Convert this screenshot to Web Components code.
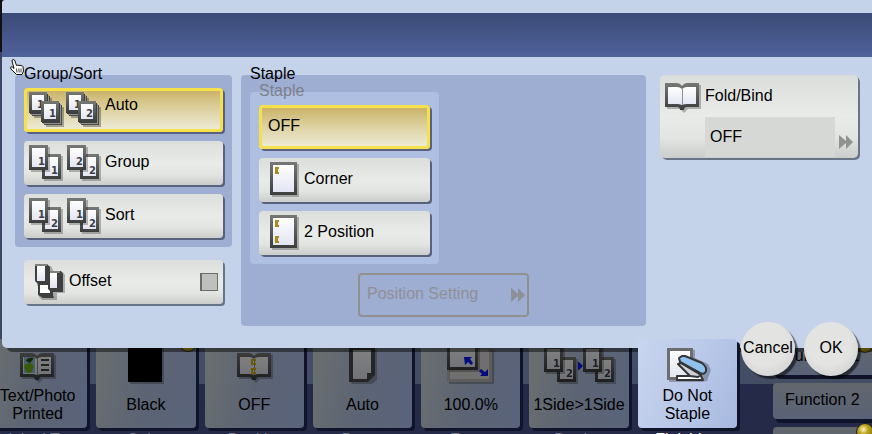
<!DOCTYPE html>
<html lang="en">
<head>
<meta charset="utf-8">
<title>Finishing</title>
<style>
  body { margin: 0; overflow: hidden; background: #252a48; font: 16px/20px "Liberation Sans", Arial, sans-serif; color: #000; }
</style>
</head>
<body>
<copier-screen>
  <finish-dialog slot="dialog">
    <option-group slot="sort" heading="Group/Sort">
      <option-button pressed high><paper-pairs slot="icon" digits="1112" stacked></paper-pairs>Auto</option-button>
      <option-button><paper-pairs slot="icon" digits="1122"></paper-pairs>Group</option-button>
      <option-button><paper-pairs slot="icon" digits="1212"></paper-pairs>Sort</option-button>
    </option-group>
    <offset-check slot="sort">Offset</offset-check>
    <option-group slot="staple" heading="Staple" fill>
      <option-group heading="Staple" nested>
        <option-button plain pressed>OFF</option-button>
        <option-button><staple-sheet slot="icon" count="1"></staple-sheet>Corner</option-button>
        <option-button><staple-sheet slot="icon" count="2"></staple-sheet>2 Position</option-button>
      </option-group>
      <position-button>Position Setting</position-button>
    </option-group>
    <fold-button slot="fold" value="OFF">Fold/Bind</fold-button>
    <round-button slot="actions">Cancel</round-button>
    <round-button slot="actions">OK</round-button>
  </finish-dialog>
  <function-bar slot="bar">
    <function-tile icon="photo" caption="Original Type">Text/Photo Printed</function-tile>
    <function-tile icon="black" caption="Color" lamp>Black</function-tile>
    <function-tile icon="booklet" caption="Booklet">OFF</function-tile>
    <function-tile icon="sheet" caption="Paper">Auto</function-tile>
    <function-tile icon="zoom" caption="Zoom">100.0%</function-tile>
    <function-tile icon="sides" caption="Duplex">1Side&gt;1Side</function-tile>
    <function-tile icon="stapler" caption="Finishing" active>Do Not Staple</function-tile>
    <side-button slot="side" lamp>Function 1</side-button>
    <side-button slot="side">Function 2</side-button>
    <side-button slot="side" lamp>Function 3</side-button>
  </function-bar>
</copier-screen>

<script>
const define = (name, render) => customElements.define(name, class extends HTMLElement {
  connectedCallback() {
    if (this.shadowRoot) return;
    this.attachShadow({ mode: 'open' }).innerHTML = render(this);
  }
});
const reset = ':host,*{box-sizing:border-box}button{font:inherit;color:inherit;border:0;margin:0;padding:0;background:none;text-align:left}svg{display:block}';
const face = 'linear-gradient(#dcdedc,#e9ebe8 50%,#e3e5e2 75%,#cbcdcc)';

const grads = `<defs>
  <linearGradient id="frame" x1="0" y1="0" x2="0" y2="1"><stop offset="0" stop-color="#767875"/><stop offset="1" stop-color="#3c3e3e"/></linearGradient>
  <linearGradient id="paper" x1="0" y1="0" x2="0" y2="1"><stop offset="0" stop-color="#fff"/><stop offset="1" stop-color="#e2e5f2"/></linearGradient>
</defs>`;
const sheet = (x, y, w, h, digit = '', shadow = true) => `
  ${shadow ? `<rect x="${x + 2}" y="${y + 2}" width="${w}" height="${h}" fill="#000" opacity=".25"/>` : ''}
  <rect x="${x}" y="${y}" width="${w}" height="${h}" fill="url(#frame)"/>
  <rect x="${x + 3}" y="${y + 3}" width="${w - 6}" height="${h - 6}" fill="url(#paper)"/>
  ${digit && `<text x="${x + w - 10}" y="${y + h - 5}" font-family="DejaVu Sans" font-weight="bold" font-size="10" fill="#3e4046">${digit}</text>`}`;
const stack = (x, y, digit) => `
  <rect x="${x + 5}" y="${y + 6}" width="18" height="20" fill="#000" opacity=".3"/>
  <rect x="${x + 3}" y="${y + 4}" width="18" height="20" fill="#4a4c4c"/>
  <rect x="${x + 2}" y="${y + 3}" width="18" height="20" fill="#8e908e"/>
  <rect x="${x + 1}" y="${y + 2}" width="18" height="20" fill="#3e4040"/>
  ${sheet(x, y, 18, 21, digit, false)}`;
const book = (x, y) => `
  <path transform="translate(${x} ${y})" fill="#000" opacity=".25" d="M2 2h13l4 3 4-3h13v24H23l-4 4-4-4H2z"/>
  <path transform="translate(${x} ${y})" fill="url(#frame)" d="M0 0h12q3 0 5 3q2-3 5-3h12v24H22q-3 0-3 3h-4q0-3-3-3H0z"/>
  <path transform="translate(${x} ${y})" fill="url(#paper)" d="M3 4h9q3 0 5 2q2-2 5-2h9v17h-9q-3 0-5 1-2-1-5-1H3z"/>
  <path transform="translate(${x} ${y})" fill="none" stroke="#8c8e96" d="M17.500 6v16"/>`;

define('paper-pairs', el => {
  const d = el.getAttribute('digits');
  const art = el.hasAttribute('stacked')
    ? stack(0, 0, d[0]) + stack(12, 9, d[1]) + stack(37, 0, d[2]) + stack(49, 9, d[3])
    : sheet(13, 9, 19, 25, d[1]) + sheet(0, 0, 19, 25, d[0]) + sheet(51, 9, 19, 25, d[3]) + sheet(38, 0, 19, 25, d[2]);
  return `<style>:host{display:block;width:76px}svg{display:block}</style><svg width="76" height="37" aria-hidden="true">${grads}${art}</svg>`;
});

define('staple-sheet', el => `<style>:host{display:block;width:40px}svg{display:block}</style>
  <svg width="40" height="37" aria-hidden="true">${grads}${sheet(6, 0, 27, 33)}
  <path fill="#aa8c1e" d="M11 5h4v2h-1v3h1v2h-4z"/>
  ${el.getAttribute('count') === '2' ? '<path fill="#aa8c1e" d="M11 21h4v2h-1v3h1v2h-4z"/>' : ''}</svg>`);

define('option-button', el => `<style>${reset}
  :host{display:block}
  button{display:flex;align-items:flex-start;width:100%;height:44px;padding:4px 5px;border-radius:4px;background:${face};box-shadow:2px 2px 0 #59617d}
  span{padding-top:7px}
  :host([high]) span{padding-top:3px}
  :host([plain]) button{padding-left:9px}
  :host([pressed]) button{background:linear-gradient(#c8af60,#dccf9c 45%,#efeedd);outline:3px solid #f6e04b;outline-offset:-3px}
  </style><button type="button" aria-pressed="${el.hasAttribute('pressed')}"><slot name="icon"></slot><span><slot></slot></span></button>`);

define('option-group', el => `<style>${reset}
  :host{display:flow-root;background:#9eadd2;border-radius:4px;padding:0 9px 9px}
  :host([nested]){background:#aebfe2;width:189px}
  h2{font:inherit;margin:-11px 0 0;height:24px}
  :host([nested]) h2{color:#7c7f88}
  div{display:flex;flex-direction:column;gap:9px}
  :host([fill]) div{align-items:flex-start}
  :host([fill]) h2{height:28px}
  </style><h2>${el.getAttribute('heading')}</h2><div><slot></slot></div>`);

define('offset-check', () => `<style>${reset}
  :host{display:block;margin-top:13px}
  label{display:flex;align-items:flex-start;height:44px;padding:4px 5px;margin:0 9px;border-radius:4px;background:${face};box-shadow:2px 2px 0 #687487}
  svg{flex:none}
  span{flex:1;padding-top:7px}
  input{appearance:none;width:18px;height:18px;margin:9px 0 0;border:1px solid #6b6d6b;border-left-width:2px;background:#bfbfbf}
  </style><label><svg width="40" height="37" aria-hidden="true">${grads}
  <path fill="#000" opacity=".25" d="M8 2h14l3 6h9l2 3v18h-8v7H13l-3-3V22H8z"/>
  <path fill="#3e4040" d="M9 20h15v11l1 3H14l-5-3z"/><path fill="#fff" d="M11 21h10v8H11z"/>
  <path fill="#3e4040" d="M19 7h13l2 3v18H22l-3-3z"/><path fill="#80827f" d="M19 7h12v2H19z"/><path fill="url(#paper)" d="M21 9h7v15h-7z"/>
  <path fill="#3e4040" d="M6 0h12l3 3v17H9l-3-3z"/><path fill="#80827f" d="M6 0h12v2H6z"/><path fill="url(#paper)" d="M8 2h8v15H8z"/>
  </svg><span><slot></slot></span><input type="checkbox"></label>`);

const arrows = '<svg width="14" height="14" aria-hidden="true"><path fill="currentColor" d="M0 0l7 6V0l7 7-7 7V8l-7 6z"/></svg>';

define('position-button', () => `<style>${reset}
  :host{display:block;width:171px;margin-left:108px}
  button{display:flex;align-items:center;justify-content:space-between;width:100%;height:44px;padding:0 2px 3px 7px;border:2px solid #928f90;border-radius:4px;color:#8f9096}
  svg{margin-top:3px}
  </style><button type="button" disabled><slot></slot>${arrows}</button>`);

define('fold-button', el => `<style>${reset}
  :host{display:block}
  button{display:grid;grid-template-columns:40px 1fr 14px;grid-template-rows:42px 40px;width:100%;padding:0 5px 1px;border-radius:5px;background:${face};box-shadow:2px 2px 0 #687487}
  .art{padding-top:8px}
  .name{grid-column:2/4;padding-top:11px}
  .value{grid-column:2;height:100%;padding:10px 5px;margin-right:4px;background:#d6d8d5}
  .go{color:#909290;padding-top:18px}
  </style><button type="button"><span class="art"><svg width="40" height="33" aria-hidden="true">${grads}${book(0, 0)}</svg></span>
  <span class="name"><slot></slot></span><span></span><span class="value">${el.getAttribute('value')}</span><span class="go">${arrows}</span></button>`);

define('round-button', () => `<style>${reset}
  :host{display:block}
  button{display:flex;align-items:center;justify-content:center;width:54px;height:54px;padding-bottom:2px;border-radius:50%;background:radial-gradient(circle at 45% 40%,#e3e4e2 50%,#c9cac8 100%);box-shadow:3px 3px 1px rgba(0,0,0,.55)}
  </style><button type="button"><slot></slot></button>`);

define('finish-dialog', () => `<style>${reset}
  :host{display:block;position:relative;z-index:1;margin-left:2px;padding:13px 0 22px;background:#c4d2ea;border-radius:3px 0 0 5px;box-shadow:5px 4px 0 rgba(0,0,0,.45)}
  header{height:44px;background:linear-gradient(#3b4b76,#4f629b)}
  .body{display:grid;grid-template-columns:217px 1fr 198px;padding:18px 14px 0 13px}
  .staple{margin:0 14px 0 9px}
  .actions{position:absolute;right:14px;bottom:-28px;display:flex;gap:9px}
  .cursor{position:absolute;left:7px;top:58px}
  </style><header></header>
  <div class="body"><div><slot name="sort"></slot></div><div class="staple"><slot name="staple"></slot></div><div><slot name="fold"></slot></div></div>
  <div class="actions"><slot name="actions"></slot></div>
  <svg class="cursor" width="16" height="18" aria-hidden="true"><path fill="#fff" stroke="#111" stroke-linejoin="round" d="M3 3q0-1.500 1.200-1.500T6 3l1.500 4.500q1.500-1 2.500 0 1.200-.8 2 .3 1.500-.5 2 .8l.5 4.400-1.500 3.500H7.500L2 11q-1-1.500 0-2.200 1-.4 3 1.700z"/><path fill="none" stroke="#444" d="M7.500 10.500l.5 4M9.800 10.500l.4 4M12 10.500v4"/></svg>`);

const tileArt = {
  photo: book(32, 14) + '<path fill="#8fc0e8" d="M36 18h11v16H36z"/><path fill="#6fb312" d="M38 25q3-2 6 0 3 2 1 5-1 4-4 4t-4-4q-2-3 1-5z"/><path fill="#26520a" d="M38 22q1-4 8-3l-4 5z"/><path fill="#444" d="M53 20h8v2h-8zM53 25h8v2h-8zM53 30h8v2h-8z"/>',
  black: '<path fill="#000" opacity=".25" d="M34 8h34v37H34z"/><path fill="#000" d="M32 5h34v38H32z"/>',
  booklet: book(32, 14) + '<path fill="#e0b000" d="M46 20h5v2h-3v2h3v2h-5zM46 29h5v2h-3v2h3v2h-5z"/>',
  sheet: '<path fill="#000" opacity=".25" d="M38 10h26v31l-5 4H38z"/><path fill="#484a48" d="M36 8h26v28l-7 7H36z"/><path fill="url(#paper)" d="M40 11h18v23h-4v6H40z"/>',
  zoom: '<path fill="#000" opacity=".25" d="M28 11h45v34H28z"/><path fill="#b8b8b6" d="M26 8h45v35H26z"/><path fill="#dededb" d="M29 11h39v29H29z"/>' + sheet(26, 5, 31, 26) + '<path fill="#0018ff" d="M43 18h8l-2 2 3 4-2 2-3-3-3 3zM67 37h-8l2-2-3-3 2-2 4 3 3-3z"/>',
  sides: sheet(27, 18, 19, 25, '2') + sheet(14, 7, 19, 26, '1') + '<path fill="#0018ff" d="M48 23h1l4 4-4 4h-1z"/>' + sheet(65, 18, 19, 25, '2') + sheet(53, 7, 19, 26, '1'),
  stapler: `<path fill="#000" opacity=".25" d="M31 11h26v8l13 6 3 6-4 11-5 1H31z"/><path fill="#6c6e6d" d="M29 9h26v32H29z"/><path fill="url(#paper)" d="M32 12h20v26H32z"/>
    <path fill="#fff" stroke="#333536" stroke-width="2" stroke-linejoin="round" d="M39 37h12l4-2 8 2 2 4H39z"/>
    <path fill="#ccd1d6" stroke="#333536" stroke-width="2" stroke-linejoin="round" d="M40 25l3-1 20 12-3 2-8-1z"/>
    <path fill="#91c2ee" stroke="#333536" stroke-width="2" stroke-linejoin="round" d="M41 19l3-2 3 0 17 7q5 4 4 8-1 4-6 2L42 23z"/>`
};
const lampCss = '.lamp{position:absolute;width:18px;height:18px;border-radius:50%;border:1px solid #222;background:radial-gradient(circle at 40% 35%,#fff6c0,#b8a01a 35%,#756500)}';

define('function-tile', el => `<style>${reset}${lampCss}
  :host{display:block;position:relative;min-width:0}
  :host([active]){z-index:2}
  button{display:flex;flex-direction:column;align-items:center;width:100%;height:89px;border-radius:4px;overflow:hidden;background:linear-gradient(100deg,#6b6f6f,#5c6474 50%,#59637a);box-shadow:3px 3px 0 #10142a}
  svg{flex:none;filter:brightness(.5)}
  span{display:flex;align-items:center;justify-content:center;height:42px;width:86px;line-height:18px;text-align:center}
  div{height:18px;margin-top:3px;line-height:18px;text-align:center;color:#777b92;white-space:nowrap}
  :host([active]) button{background:linear-gradient(115deg,#c8d5ef,#bac9e9 50%,#a7b8df)}
  :host([active]) svg{filter:none}
  :host([active]) div{color:#fff}
  .lamp{right:-1px;top:-5px}
  </style><button type="button"><svg width="99" height="45" aria-hidden="true">${grads}${tileArt[el.getAttribute('icon')]}</svg><span><slot></slot></span></button>
  <div>${el.getAttribute('caption')}</div>${el.hasAttribute('lamp') ? '<i class="lamp"></i>' : ''}`);

define('side-button', el => `<style>${reset}${lampCss}
  :host{display:block;position:relative}
  button{width:100%;height:36px;padding:0 0 2px 12px;border-radius:4px 0 0 4px;background:linear-gradient(#62676c,#596277);box-shadow:3px 4px 0 #10142a;white-space:nowrap}
  .lamp{right:-2px;top:-4px}
  </style><button type="button"><slot></slot></button>${el.hasAttribute('lamp') ? '<i class="lamp"></i>' : ''}`);

define('function-bar', () => `<style>${reset}
  :host{display:grid;grid-template-columns:1fr 99px;column-gap:36px;height:95px;margin:-9px 0 0 -12px;background:linear-gradient(#434d63 45px,#252a48 45px)}
  .tiles{display:grid;grid-template-columns:repeat(7,1fr);gap:9px}
  .side{display:flex;flex-direction:column;gap:8px}
  </style><div class="tiles"><slot></slot></div><div class="side"><slot name="side"></slot></div>`);

define('copier-screen', () => `<style>
  :host{display:block;overflow:hidden;min-height:100vh;background:linear-gradient(#111 52px,#3c4663 52px 348px,#252a48 348px)}
  </style><slot name="dialog"></slot><slot name="bar"></slot>`);
</script>
</body>
</html>
